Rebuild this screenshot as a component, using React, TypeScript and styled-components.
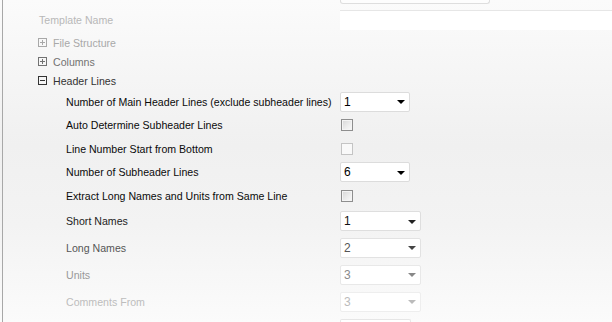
import styled, { createGlobalStyle } from 'styled-components';

const GlobalStyle = createGlobalStyle`
  html, body {
    margin: 0;
    padding: 0;
    background: #fafafa;
  }
  body {
    font-family: 'Liberation Sans', Arial, sans-serif;
    font-size: 10.6px;
  }
`;

const Page = styled.div`
  width: 612px;
  height: 322px;
  overflow: hidden;
  padding-left: 2px;
  box-sizing: border-box;
  background: linear-gradient(#fbfbfb 0%, #f0f0f0 45%, #f3f3f3 70%, #fbfbfb 100%);
`;

const Panel = styled.div`
  border-left: 1px solid #a8a8a8;
  height: 100%;
  display: flex;
  flex-direction: column;
`;

const TopStub = styled.div`
  margin-left: 337px;
  width: 148px;
  height: 3px;
  flex: none;
  background: #fdfdfd;
  border: 1px solid #dedede;
  border-top: none;
  border-radius: 0 0 3px 3px;
`;

const Row = styled.div<{ $h: number; $mt?: number }>`
  display: grid;
  grid-template-columns: 337px 1fr;
  align-items: center;
  height: ${(p) => p.$h}px;
  margin-top: ${(p) => p.$mt ?? 0}px;
  flex: none;
`;

const Label = styled.div<{ $indent: number; $color: string }>`
  padding-left: ${(p) => p.$indent}px;
  color: ${(p) => p.$color};
  white-space: nowrap;
  display: flex;
  align-items: center;
`;

const TextInput = styled.div`
  height: 19px;
  background: #fff;
  border-top: 1px solid #e6e6e6;
`;

const ToggleBox = styled.span<{ $color: string }>`
  width: 9px;
  height: 9px;
  box-sizing: border-box;
  border: 1px solid ${(p) => p.$color};
  margin-right: 6px;
  position: relative;
  flex: none;
  &::before {
    content: '';
    position: absolute;
    left: 1px;
    right: 1px;
    top: 3px;
    height: 1px;
    background: ${(p) => p.$color};
  }
`;

const PlusBox = styled(ToggleBox)`
  &::after {
    content: '';
    position: absolute;
    top: 1px;
    bottom: 1px;
    left: 3px;
    width: 1px;
    background: ${(p) => p.$color};
  }
`;

const Select = styled.div<{ $w: number; $color: string; $border: string }>`
  width: ${(p) => p.$w}px;
  height: 20px;
  box-sizing: border-box;
  background: #fff;
  border: 1px solid ${(p) => p.$border};
  border-radius: 2px;
  display: flex;
  align-items: center;
  justify-content: space-between;
  padding: 0 4px 0 3px;
  color: ${(p) => p.$color};
  font-size: 12px;
`;

const Arrow = styled.span<{ $color: string }>`
  width: 0;
  height: 0;
  border-left: 4px solid transparent;
  border-right: 4px solid transparent;
  border-top: 4px solid ${(p) => p.$color};
  margin-top: 1px;
`;

const Check = styled.div<{ $disabled?: boolean }>`
  width: 12px;
  height: 12px;
  box-sizing: border-box;
  margin-left: 1px;
  border: 1px solid ${(p) => (p.$disabled ? '#c4c4c4' : '#8e8e8e')};
  background: ${(p) =>
    p.$disabled ? '#f9f9f9' : 'linear-gradient(135deg, #d6d6d6 0%, #ececec 55%, #fafafa 100%)'};
  box-shadow: ${(p) => (p.$disabled ? 'none' : 'inset 0 0 0 1px #f4f4f4')};
`;

const BottomStub = styled.div`
  margin-left: 337px;
  margin-top: 4px;
  width: 69px;
  height: 10px;
  flex: none;
  background: #fff;
  border: 1px solid #e6e6e6;
  border-bottom: none;
  border-radius: 2px 2px 0 0;
`;

type Field =
  | { kind: 'select'; value: string; w: number; color: string; border: string; arrow: string }
  | { kind: 'check'; disabled?: boolean };

const subRows: { label: string; color: string; h: number; field: Field }[] = [
  {
    label: 'Number of Main Header Lines (exclude subheader lines)',
    color: '#0a0a0a',
    h: 23,
    field: { kind: 'select', value: '1', w: 70, color: '#000', border: '#dcdcdc', arrow: '#000' },
  },
  { label: 'Auto Determine Subheader Lines', color: '#0a0a0a', h: 24, field: { kind: 'check' } },
  { label: 'Line Number Start from Bottom', color: '#0a0a0a', h: 23, field: { kind: 'check', disabled: true } },
  {
    label: 'Number of Subheader Lines',
    color: '#0a0a0a',
    h: 24,
    field: { kind: 'select', value: '6', w: 70, color: '#000', border: '#dcdcdc', arrow: '#000' },
  },
  { label: 'Extract Long Names and Units from Same Line', color: '#0a0a0a', h: 24, field: { kind: 'check' } },
  {
    label: 'Short Names',
    color: '#222',
    h: 26,
    field: { kind: 'select', value: '1', w: 81, color: '#111', border: '#dedede', arrow: '#222' },
  },
  {
    label: 'Long Names',
    color: '#555',
    h: 27,
    field: { kind: 'select', value: '2', w: 81, color: '#555', border: '#e2e2e2', arrow: '#444' },
  },
  {
    label: 'Units',
    color: '#999',
    h: 27,
    field: { kind: 'select', value: '3', w: 81, color: '#8a8a8a', border: '#e8e8e8', arrow: '#888' },
  },
  {
    label: 'Comments From',
    color: '#bdbdbd',
    h: 27,
    field: { kind: 'select', value: '3', w: 81, color: '#bbb', border: '#eee', arrow: '#bbb' },
  },
];

const treeRows = [
  { label: 'File Structure', color: '#a8a8a8', open: false },
  { label: 'Columns', color: '#727272', open: false },
  { label: 'Header Lines', color: '#333', open: true },
];

export default function App() {
  return (
    <>
      <GlobalStyle />
      <Page>
        <Panel>
          <TopStub />
          <Row $h={20} $mt={6}>
            <Label $indent={36} $color='#b8b8b8'>Template Name</Label>
            <TextInput />
          </Row>
          {treeRows.map((r, i) => (
            <Row key={r.label} $h={19} $mt={i === 0 ? 3 : 0}>
              <Label $indent={35} $color={r.color}>
                {r.open ? <ToggleBox $color={r.color} /> : <PlusBox $color={r.color} />}
                {r.label}
              </Label>
            </Row>
          ))}
          {subRows.map((r) => (
            <Row key={r.label} $h={r.h}>
              <Label $indent={63} $color={r.color}>{r.label}</Label>
              <div>
                {r.field.kind === 'select' ? (
                  <Select $w={r.field.w} $color={r.field.color} $border={r.field.border}>
                    {r.field.value}
                    <Arrow $color={r.field.arrow} />
                  </Select>
                ) : (
                  <Check $disabled={r.field.disabled} />
                )}
              </div>
            </Row>
          ))}
          <BottomStub />
        </Panel>
      </Page>
    </>
  );
}
